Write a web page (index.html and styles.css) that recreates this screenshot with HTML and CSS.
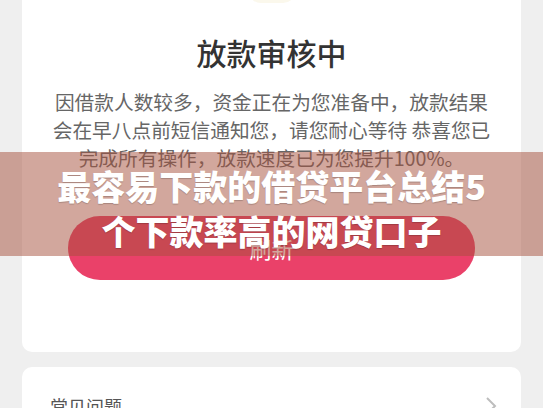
FILE: index.html
```html
<!DOCTYPE html>
<html lang="zh-CN">
<head>
    <meta charset="UTF-8">
    <meta name="viewport" content="width=device-width, initial-scale=1.0">
    <title>放款审核中</title>
    <link rel="stylesheet" href="styles.css">
</head>
<body>

<div class="page">
    <!-- 审核状态 -->
    <div class="card status-card">
        <div class="status-icon"></div>
        <h1 class="status-title">放款审核中</h1>
        <p class="status-text">因借款人数较多，资金正在为您准备中，放款结果会在早八点前短信通知您，请您耐心等待 恭喜您已完成所有操作，放款速度已为您提升100%。</p>
        <button class="refresh-btn">刷新</button>
    </div>

    <!-- 常见问题 -->
    <div class="card faq-card">
        <span class="faq-title">常见问题</span>
        <svg class="faq-arrow" width="12" height="20" viewBox="0 0 12 20">
            <path d="M2 2 L10 10 L2 18" fill="none" stroke="#bdbdbd" stroke-width="2"/>
        </svg>
    </div>
</div>

<!-- 标题横幅 -->
<div class="banner">
    <div class="banner-text">最容易下款的借贷平台总结5个下款率高的网贷口子</div>
</div>

</body>
</html>
```

FILE: styles.css
```css
body {
    margin: 0;
    padding: 0;
    background-color: #efefef;
    font-family: "Noto Sans CJK SC", "Noto Sans", sans-serif;
    overflow: hidden;
}

.page {
    padding: 0 22px;
}

.card {
    background-color: #fff;
    border-radius: 10px;
}

.status-card {
    margin-top: -10px;
    padding-bottom: 72px;
    text-align: center;
}

.status-icon {
    width: 48px;
    height: 13px;
    margin: 0 auto;
    background-color: #fbf8ec;
    border-radius: 0 0 24px 24px;
}

.status-title {
    margin: 28px 0 0;
    font-size: 30px;
    line-height: 42px;
    font-weight: 500;
    color: #333;
}

.status-text {
    margin: 15px 0 0;
    padding: 0 26px;
    font-size: 19.7px;
    line-height: 28px;
    color: #666;
}

.refresh-btn {
    display: block;
    width: calc(100% - 92px);
    height: 64px;
    margin: 44px auto 0;
    border: none;
    border-radius: 32px;
    background-color: #ea4169;
    color: #fff;
    font-family: inherit;
    font-size: 22px;
}

.faq-card {
    margin-top: 15px;
    padding: 26px 24px 30px 28px;
    display: flex;
    align-items: center;
    justify-content: space-between;
}

.faq-title {
    font-size: 18px;
    line-height: 26px;
    color: #555;
}

.banner {
    position: absolute;
    top: 152px;
    left: 0;
    width: 100%;
    height: 104px;
    box-sizing: border-box;
    padding: 11px 50px 3px;
    background-color: rgba(165, 80, 60, 0.5);
}

.banner-text {
    font-size: 34px;
    line-height: 45px;
    font-weight: 900;
    color: #fff;
    text-align: center;
    text-shadow: 0 1px 1px rgba(0, 0, 0, 0.2);
}
```
